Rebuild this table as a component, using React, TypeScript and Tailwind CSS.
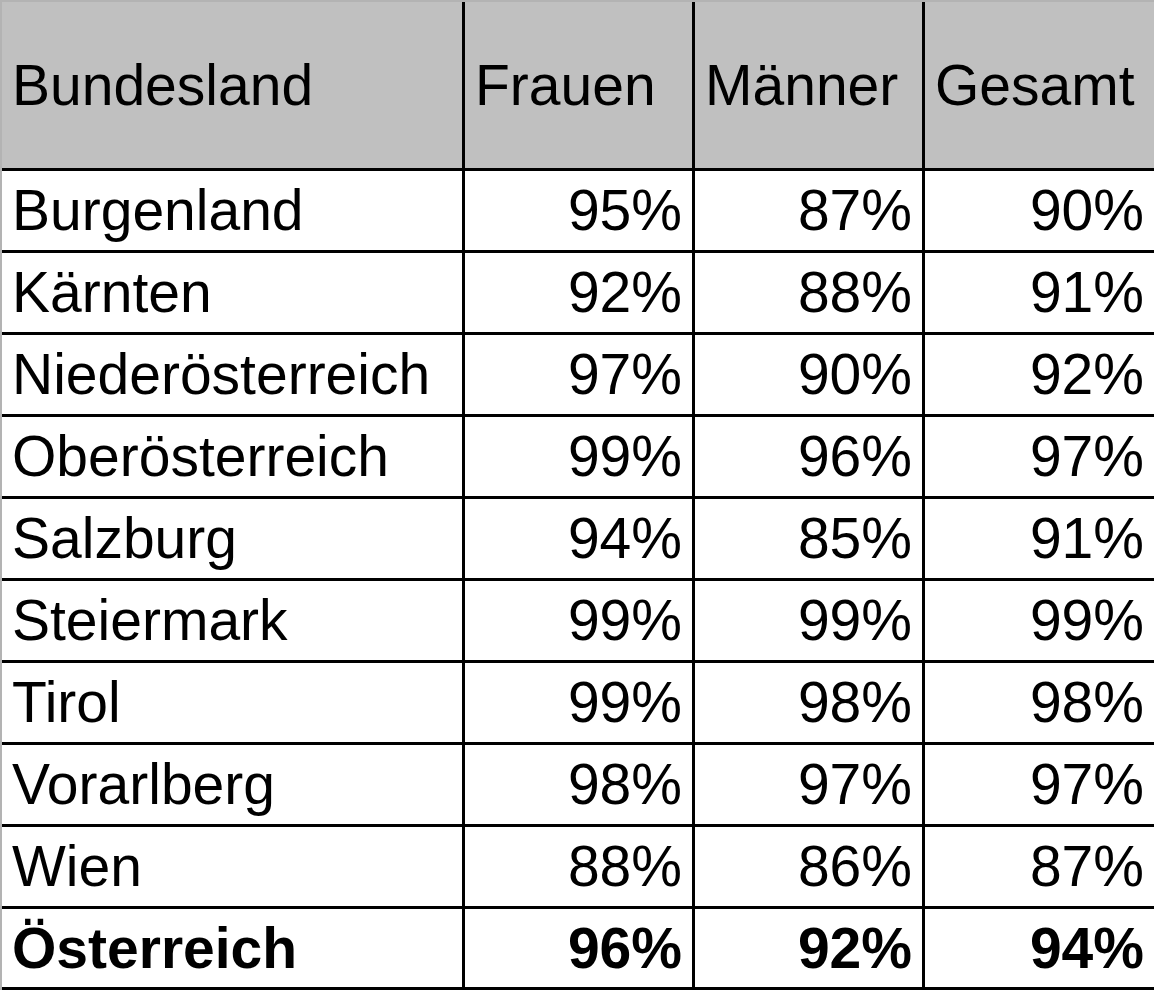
import React from 'react';

const rows: [string, string, string, string][] = [
  ['Burgenland', '95%', '87%', '90%'],
  ['Kärnten', '92%', '88%', '91%'],
  ['Niederösterreich', '97%', '90%', '92%'],
  ['Oberösterreich', '99%', '96%', '97%'],
  ['Salzburg', '94%', '85%', '91%'],
  ['Steiermark', '99%', '99%', '99%'],
  ['Tirol', '99%', '98%', '98%'],
  ['Vorarlberg', '98%', '97%', '97%'],
  ['Wien', '88%', '86%', '87%'],
];

const total: [string, string, string, string] = ['Österreich', '96%', '92%', '94%'];

const grid = "grid grid-cols-[463px_230px_230px_229px]";

function Row({ cells, bold, last }: { cells: [string, string, string, string]; bold?: boolean; last?: boolean }) {
  return (
    <div className={`${grid} ${last ? "h-[81px]" : "h-[82px]"} bg-white ${bold ? "font-bold" : ""}`}>
      {cells.map((c, i) => (
        <div
          key={i}
          className={`flex items-center border-b-[3px] border-black ${i < 3 ? "border-r-[3px]" : ""} ${i === 0 ? "justify-start pl-[10px]" : "justify-end pr-[10px]"}`}
        >
          {c}
        </div>
      ))}
    </div>
  );
}

export default function App() {
  return (
    <div className="w-[1154px] h-[990px] overflow-hidden bg-[#b3b3b3] pl-[2px] pt-[2px] text-black text-[57px] leading-none font-['Liberation_Sans',Arial,sans-serif]">
      <div className={`${grid} h-[169px] bg-[#c0c0c0]`}>
        {['Bundesland', 'Frauen', 'Männer', 'Gesamt'].map((h, i) => (
          <div
            key={h}
            className={`flex items-center pl-[10px] border-b-[3px] border-black ${i < 3 ? "border-r-[3px]" : ""}`}
          >
            {h}
          </div>
        ))}
      </div>
      {rows.map((r) => (
        <Row key={r[0]} cells={r} />
      ))}
      <Row cells={total} bold last />
    </div>
  );
}
